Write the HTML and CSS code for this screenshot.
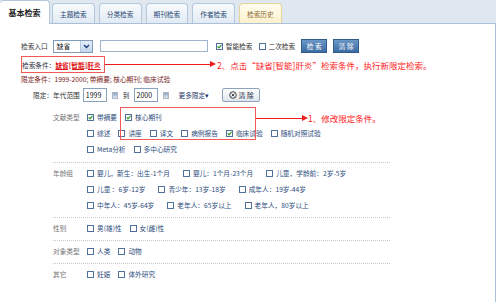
FILE: index.html
```html
<!DOCTYPE html>
<html lang="zh-CN">
<head>
<meta charset="UTF-8">
<title>基本检索</title>
<link rel="stylesheet" href="styles.css">
</head>
<body>
<div class="page">
<div class="tabs">
<div class="tab active">基本检索</div>
<div class="tab">主题检索</div>
<div class="tab">分类检索</div>
<div class="tab">期刊检索</div>
<div class="tab">作者检索</div>
<div class="tab hist">检索历史</div>
</div>

<div class="panel">
<div class="row search">
<span class="lbl">检索入口</span>
<span class="select"><span class="sel-val">缺省</span><span class="sel-btn"><svg width="7" height="5" viewBox="0 0 7 5"><polyline points="1,1 3.5,3.5 6,1" fill="none" stroke="#1d3f78" stroke-width="1.4"/></svg></span></span>
<span class="textbox"></span>
<span class="opt first"><span class="cb"><svg width="5" height="5" viewBox="0 0 5 5"><polyline points="0.6,2.4 2,3.9 4.5,0.8" fill="none" stroke="#2b9a2b" stroke-width="1.2"/></svg></span>智能检索</span>
<span class="opt"><span class="cb"></span>二次检索</span>
<span class="btn blue">检 索</span>
<span class="btn blue">清 除</span>
</div>

<div class="row cond">
<span class="redbox">检索条件：<span class="hit">缺省[智能]肝炎</span></span>
<span class="arrow long"></span>
<span class="note">2、点击“缺省[智能]肝炎”检索条件，执行新限定检索。</span>
</div>

<div class="row limits">限定条件：1999-2000; 带摘要; 核心期刊; 临床试验</div>

<div class="row years">
<span>限定：年代范围</span>
<span class="year">1999</span><span class="cal"></span>
<span class="to">到</span>
<span class="year">2000</span><span class="cal"></span>
<span class="more">更多限定▾</span>
<span class="btn grey"><svg width="8" height="8" viewBox="0 0 8 8"><circle cx="4" cy="4" r="3.3" fill="none" stroke="#333" stroke-width="0.9"/><path d="M2.6 2.6L5.4 5.4M5.4 2.6L2.6 5.4" stroke="#333" stroke-width="0.9"/></svg>清 除</span>
</div>

<div class="filters">
<div class="group doc">
<div class="glabel">文献类型</div>
<div class="gopts">
<div class="line">
<span class="opt"><span class="cb"><svg width="5" height="5" viewBox="0 0 5 5"><polyline points="0.6,2.4 2,3.9 4.5,0.8" fill="none" stroke="#2b9a2b" stroke-width="1.2"/></svg></span>带摘要</span>
<span class="opt"><span class="cb"><svg width="5" height="5" viewBox="0 0 5 5"><polyline points="0.6,2.4 2,3.9 4.5,0.8" fill="none" stroke="#2b9a2b" stroke-width="1.2"/></svg></span>核心期刊</span>
</div>
<div class="line">
<span class="opt"><span class="cb"></span>综述</span>
<span class="opt"><span class="cb"></span>讲座</span>
<span class="opt"><span class="cb"></span>译文</span>
<span class="opt"><span class="cb"></span>病例报告</span>
<span class="opt"><span class="cb"><svg width="5" height="5" viewBox="0 0 5 5"><polyline points="0.6,2.4 2,3.9 4.5,0.8" fill="none" stroke="#2b9a2b" stroke-width="1.2"/></svg></span>临床试验</span>
<span class="opt"><span class="cb"></span>随机对照试验</span>
</div>
<div class="line">
<span class="opt"><span class="cb"></span>Meta分析</span>
<span class="opt"><span class="cb"></span>多中心研究</span>
</div>
</div>
</div>

<div class="group age">
<div class="glabel">年龄组</div>
<div class="gopts">
<div class="line">
<span class="opt"><span class="cb"></span>婴儿，新生：出生-1个月</span>
<span class="opt"><span class="cb"></span>婴儿：1个月-23个月</span>
<span class="opt"><span class="cb"></span>儿童，学龄前：2岁-5岁</span>
</div>
<div class="line">
<span class="opt"><span class="cb"></span>儿童 ：6岁-12岁</span>
<span class="opt"><span class="cb"></span>青少年：13岁-18岁</span>
<span class="opt"><span class="cb"></span>成年人：19岁-44岁</span>
</div>
<div class="line">
<span class="opt"><span class="cb"></span>中年人：45岁-64岁</span>
<span class="opt"><span class="cb"></span>老年人：65岁以上</span>
<span class="opt"><span class="cb"></span>老年人，80岁以上</span>
</div>
</div>
</div>

<div class="group">
<div class="glabel">性别</div>
<div class="gopts">
<div class="line">
<span class="opt"><span class="cb"></span>男(雄)性</span>
<span class="opt"><span class="cb"></span>女(雌)性</span>
</div>
</div>
</div>

<div class="group">
<div class="glabel">对象类型</div>
<div class="gopts">
<div class="line">
<span class="opt"><span class="cb"></span>人类</span>
<span class="opt"><span class="cb"></span>动物</span>
</div>
</div>
</div>

<div class="group last">
<div class="glabel">其它</div>
<div class="gopts">
<div class="line">
<span class="opt"><span class="cb"></span>妊娠</span>
<span class="opt"><span class="cb"></span>体外研究</span>
</div>
</div>
</div>
</div>
</div>

<!-- annotation over the filter block -->
<div class="note1">
<span class="redbox big"></span>
<span class="arrow short"></span>
<span class="note">1、修改限定条件。</span>
</div>
</div>
</body>
</html>
```

FILE: styles.css
```css
body{margin:0;background:#fff;font-family:"Noto Sans CJK SC","Noto Sans",sans-serif;font-size:6.7px;color:#333}
.page{position:relative;width:496px;height:302px;overflow:hidden}

.tabs{display:flex;align-items:flex-end;height:23px;background:#dfe8f1;border-bottom:1px solid #a9c0d8}
.tab{box-sizing:border-box;height:20px;margin-left:4px;padding:0 7px;border:1px solid #b3c8dd;border-bottom:0;border-radius:4px 4px 0 0;background:linear-gradient(#f8fbfd,#e1eaf4);color:#2b4a74;display:flex;align-items:center}
.tab.active{width:50px;height:24px;margin:0 -2px -1px 0;border-left:0;background:#fff;justify-content:center;font-weight:bold;font-size:8px;color:#222}
.tab.hist{background:linear-gradient(#fffdf0,#fbf1cc);border-color:#e5d497;color:#8b6a34}

.panel{box-sizing:border-box;height:278px;padding:15px 0 0 21px;border-right:1px solid #a9c0d8}
.row{display:flex;align-items:center}
.search{height:14px}
.select{box-sizing:border-box;display:flex;align-items:center;justify-content:space-between;width:40px;height:13px;margin-left:5px;border:1px solid #7f9db9;background:#fff;color:#111}
.sel-val{padding-left:3px}
.sel-btn{display:flex;align-items:center;justify-content:center;width:11px;height:11px;background:linear-gradient(#e6eef9,#c3d5ee);border-left:1px solid #b6c9e2}
.textbox{box-sizing:border-box;width:108px;height:12px;margin-left:7px;border:1px solid #9cb3cb;background:#fff}
.opt{display:inline-flex;align-items:center;color:#2d4d7c;white-space:nowrap}
.search .opt{margin-left:6px;color:#333}
.search .opt.first{margin-left:8px}
.cb{box-sizing:border-box;display:inline-flex;align-items:center;justify-content:center;width:7px;height:7px;margin-right:3px;border:1px solid #52719a;background:#fff}
.btn{box-sizing:border-box;display:inline-flex;align-items:center;justify-content:center;height:14px;white-space:pre}
.btn.blue{width:26px;margin-left:6px;border:1px solid #2f5b8d;background:linear-gradient(#6b97c6,#3d6ca3);color:#fff}
.search .btn.blue:first-of-type{margin-left:8px}
.btn.grey{width:38px;margin-left:13px;gap:2px;border:1px solid #8ea3bb;border-radius:2px;background:linear-gradient(#fdfefe,#dfe6ee);color:#223}

.cond{margin-top:3px;height:17px}
.redbox{box-sizing:border-box;display:inline-flex;align-items:center;height:17px;width:84px;border:1px solid #f25a5a;color:#334}
.hit{color:#e01010;font-weight:bold;text-decoration:underline}
.arrow{position:relative;display:inline-block;height:1px;background:#ee1c1c}
.arrow::after{content:"";position:absolute;right:-6px;top:-3px;border-left:6px solid #ee1c1c;border-top:3.5px solid transparent;border-bottom:3.5px solid transparent}
.arrow.long{width:105px;margin-right:7px}
.note{color:#f22;font-size:8.5px;white-space:nowrap}

.limits{height:11px;color:#7a1c1c}
.years{margin-top:4px;height:14px;padding-left:12px}
.year{box-sizing:border-box;display:inline-flex;align-items:flex-end;width:24px;height:14px;margin-left:3px;padding:0 0 1px 2px;border:1px solid #8aa3bd;background:#fff;color:#111;font-size:7px}
.cal{box-sizing:border-box;width:6px;height:7px;margin-left:5px;border:1px solid #a9b9c9;background:linear-gradient(#8ea5bf,#e1e8f0)}
.to{margin-left:5px;margin-right:1px}
.more{margin-left:10px;color:#1d3868}

.filters{margin:5px 0 0 32px;width:337px}
.group{display:flex;padding:2px 0 4px;border-bottom:1px dotted #c9c9c9}
.group.doc{padding-bottom:5px}
.group.last{border-bottom:0}
.glabel{width:34px;height:16px;line-height:16px;color:#777}
.line{display:flex;align-items:center;height:16px}
.line .opt{margin-right:8px}
.age .line .opt{margin-right:13px}

.note1{position:absolute;left:120px;top:107px;display:flex;align-items:flex-start}
.redbox.big{width:136px;height:33px}
.note1 .arrow.short{width:46px;margin:11px 6px 0 0}
.note1 .note{margin-top:5px}
```
